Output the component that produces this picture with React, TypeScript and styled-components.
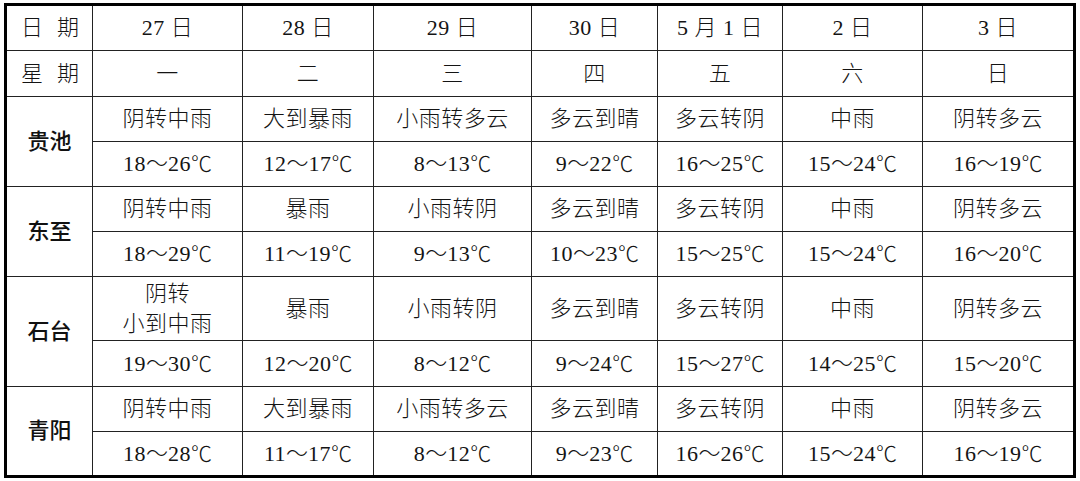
import React from "react";
import styled, { createGlobalStyle } from "styled-components";

const GlobalStyle = createGlobalStyle`
  html, body {
    margin: 0;
    padding: 0;
    background: #ffffff;
  }
  body {
    font-family: "Liberation Serif", "Noto Sans CJK SC", serif;
    color: #111;
  }
`;

const Page = styled.div`
  padding: 3px 4px 0 4px;
  width: 1080px;
  height: 481px;
  box-sizing: border-box;
  background: #fff;
`;

const Table = styled.table`
  border-collapse: separate;
  border-spacing: 0;
  table-layout: fixed;
  width: 1072px;
  border: 3px solid #000;
  box-sizing: border-box;
`;

const Row = styled.tr<{ $h: number }>`
  height: ${(p) => p.$h}px;
`;

const Cell = styled.td<{ $lastCol?: boolean; $lastRow?: boolean }>`
  box-sizing: border-box;
  padding: 0;
  text-align: center;
  vertical-align: middle;
  font-size: 22px;
  font-weight: 300;
  letter-spacing: 0.5px;
  line-height: 30px;
  color: #141414;
  border-right: ${(p) => (p.$lastCol ? "none" : "1px solid #222")};
  border-bottom: ${(p) => (p.$lastRow ? "none" : "1px solid #222")};
  white-space: nowrap;
`;

const CityCell = styled(Cell)`
  font-weight: 500;
  letter-spacing: 0;
  color: #111;
`;

const Spaced = styled.span`
  letter-spacing: 14px;
  padding-left: 14px;
`;

const Sym = styled.span`
  font-family: "Noto Sans CJK SC", sans-serif;
  font-weight: 300;
  letter-spacing: 0;
  line-height: 0;
`;

const Celsius = styled(Sym)`
  font-size: 21px;
`;

const colWidths = [86, 150, 131, 158, 126, 125, 140, 150];

const dates = ["27 日", "28 日", "29 日", "30 日", "5 月 1 日", "2 日", "3 日"];
const weekdays = ["一", "二", "三", "四", "五", "六", "日"];

type City = {
  name: string;
  weather: string[];
  temps: [number, number][];
  heights: [number, number];
};

const cities: City[] = [
  {
    name: "贵池",
    weather: ["阴转中雨", "大到暴雨", "小雨转多云", "多云到晴", "多云转阴", "中雨", "阴转多云"],
    temps: [[18, 26], [12, 17], [8, 13], [9, 22], [16, 25], [15, 24], [16, 19]],
    heights: [45, 45],
  },
  {
    name: "东至",
    weather: ["阴转中雨", "暴雨", "小雨转阴", "多云到晴", "多云转阴", "中雨", "阴转多云"],
    temps: [[18, 29], [11, 19], [9, 13], [10, 23], [15, 25], [15, 24], [16, 20]],
    heights: [45, 45],
  },
  {
    name: "石台",
    weather: ["阴转\n小到中雨", "暴雨", "小雨转阴", "多云到晴", "多云转阴", "中雨", "阴转多云"],
    temps: [[19, 30], [12, 20], [8, 12], [9, 24], [15, 27], [14, 25], [15, 20]],
    heights: [64, 46],
  },
  {
    name: "青阳",
    weather: ["阴转中雨", "大到暴雨", "小雨转多云", "多云到晴", "多云转阴", "中雨", "阴转多云"],
    temps: [[18, 28], [11, 17], [8, 12], [9, 23], [16, 26], [15, 24], [16, 19]],
    heights: [45, 43],
  },
];

const renderText = (t: string) =>
  t.split("\n").map((line, i, arr) => (
    <React.Fragment key={i}>
      {line}
      {i < arr.length - 1 && <br />}
    </React.Fragment>
  ));

const Temp = ({ lo, hi }: { lo: number; hi: number }) => (
  <>
    {lo}
    <Sym>～</Sym>
    {hi}
    <Celsius>℃</Celsius>
  </>
);

export default function App() {
  return (
    <>
      <GlobalStyle />
      <Page>
        <Table>
          <colgroup>
            {colWidths.map((w, i) => (
              <col key={i} style={{ width: w }} />
            ))}
          </colgroup>
          <tbody>
            <Row $h={45}>
              <Cell>
                <Spaced>日期</Spaced>
              </Cell>
              {dates.map((d, i) => (
                <Cell key={i} $lastCol={i === dates.length - 1}>
                  {d}
                </Cell>
              ))}
            </Row>
            <Row $h={46}>
              <Cell>
                <Spaced>星期</Spaced>
              </Cell>
              {weekdays.map((d, i) => (
                <Cell key={i} $lastCol={i === weekdays.length - 1}>
                  {d}
                </Cell>
              ))}
            </Row>
            {cities.map((c, ci) => {
              const lastCity = ci === cities.length - 1;
              return (
                <React.Fragment key={c.name}>
                  <Row $h={c.heights[0]}>
                    <CityCell rowSpan={2} $lastRow={lastCity}>
                      {c.name}
                    </CityCell>
                    {c.weather.map((w, i) => (
                      <Cell key={i} $lastCol={i === c.weather.length - 1}>
                        {renderText(w)}
                      </Cell>
                    ))}
                  </Row>
                  <Row $h={c.heights[1]}>
                    {c.temps.map(([lo, hi], i) => (
                      <Cell
                        key={i}
                        $lastCol={i === c.temps.length - 1}
                        $lastRow={lastCity}
                      >
                        <Temp lo={lo} hi={hi} />
                      </Cell>
                    ))}
                  </Row>
                </React.Fragment>
              );
            })}
          </tbody>
        </Table>
      </Page>
    </>
  );
}
